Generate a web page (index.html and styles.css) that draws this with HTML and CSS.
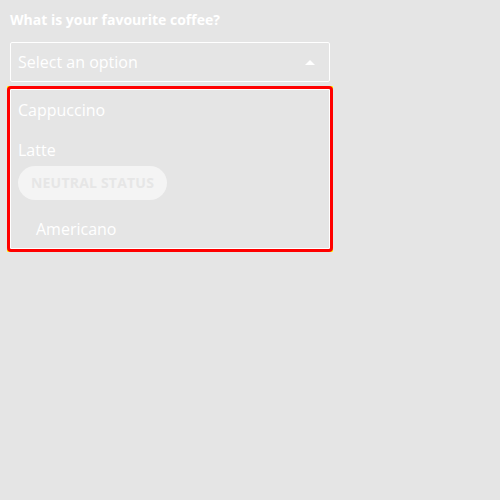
FILE: index.html
```html
<!DOCTYPE html>
<html lang="en">
<head>
<meta charset="utf-8">
<title>Coffee select</title>
<link rel="stylesheet" href="styles.css">
</head>
<body>
<div class="field">
  <label class="label" for="coffee">What is your favourite coffee?</label>
  <div class="select" id="coffee">
    <span class="placeholder">Select an option</span>
    <svg class="caret" width="10" height="5" viewBox="0 0 10 5"><path d="M0 5 L5 0 L10 5 Z" fill="#ffffff"/></svg>
  </div>
  <div class="ring">
    <ul class="listbox">
      <li class="option">Cappuccino</li>
      <li class="group">
        <div class="group-title">Latte</div>
        <span class="pill">Neutral status</span>
      </li>
      <li class="option sub">Americano</li>
    </ul>
  </div>
</div>
</body>
</html>
```
FILE: styles.css
```css
html, body {
  margin: 0;
  padding: 0;
  background: #e5e5e5;
  font-family: "Open Sans", "Noto Sans", sans-serif;
  color: #ffffff;
}
.field {
  padding: 10px 10px;
  width: 320px;
  display: flex;
  flex-direction: column;
}
.label {
  font-size: 14px;
  font-weight: 700;
  line-height: 20px;
  margin-bottom: 12px;
}
.select {
  height: 38px;
  border: 1px solid #ffffff;
  border-radius: 2px;
  display: flex;
  align-items: center;
  justify-content: space-between;
  padding: 0 14px 0 7px;
  font-size: 16px;
}
.caret { display: block; }
.ring {
  margin-top: 4px;
  margin-left: -3px;
  margin-right: -3px;
  background: #ffff00;
  border-radius: 1px;
}
.listbox {
  list-style: none;
  margin: 0;
  border: 3px solid #ff0000;
  border-radius: 4px;
  background: #e5e5e5;
  box-shadow: inset 0 0 0 1px #ffffff;
  padding: 1px;
  font-size: 16px;
  line-height: 24px;
}
.option {
  padding: 8px 7px;
}
.option.sub {
  padding-left: 25px;
  padding-top: 17px;
  padding-bottom: 7px;
}
.group {
  padding: 8px 7px 0;
  display: flex;
  flex-direction: column;
  align-items: flex-start;
  gap: 4px;
}
.pill {
  background: #f4f4f4;
  color: #e6e6e6;
  border-radius: 17px;
  height: 34px;
  line-height: 34px;
  padding: 0 13px;
  font-size: 14px;
  font-weight: 700;
  text-transform: uppercase;
  letter-spacing: 0.2px;
}
```
